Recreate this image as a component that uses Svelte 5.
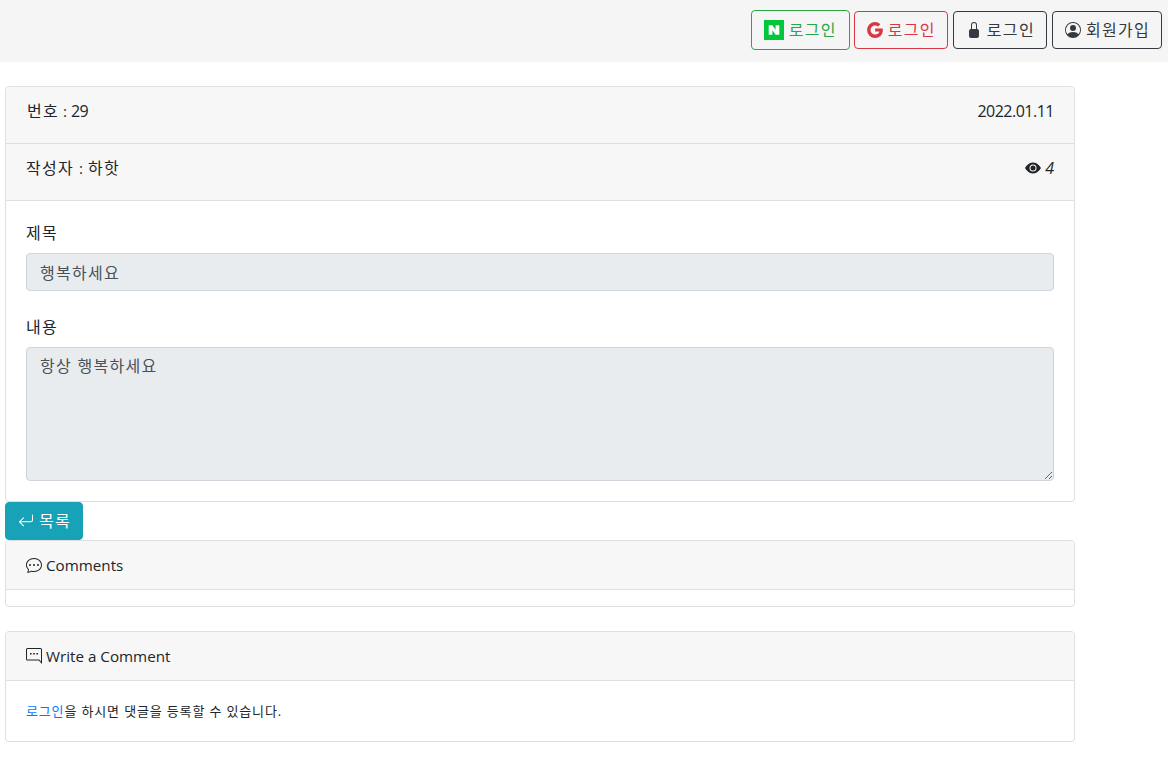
<script lang="ts">
	let title = '행복하세요';
	let content = '항상 행복하세요';
</script>

<header class="topbar">
	<button class="btn btn-naver">
		<svg class="naver" viewBox="0 0 20 20" aria-hidden="true">
			<rect width="20" height="20" fill="#00c73c" />
			<path d="M4.700 5.200h3.700l3.200 4.500V5.200h3.700v9.600h-3.700L8.400 10.300v4.500H4.700z" fill="#fff" />
		</svg>
		<span class="ko">로그인</span>
	</button>
	<button class="btn btn-google">
		<svg class="ico" viewBox="0 0 16 16" aria-hidden="true">
			<path fill="currentColor" d="M15.55 6.55H8.160v3.050h4.250c-.4 1.900-2 3-4.250 3A4.600 4.600 0 0 1 3.500 8a4.600 4.600 0 0 1 4.660-4.600c1.120 0 2.130.4 2.920 1.050l2.300-2.300A7.900 7.900 0 0 0 8.160 0 8 8 0 0 0 .1 8a8 8 0 0 0 8.060 8c4.030 0 7.700-2.930 7.700-8 0-.47-.12-.97-.31-1.450z" />
		</svg>
		<span class="ko">로그인</span>
	</button>
	<button class="btn btn-dark">
		<svg class="ico" viewBox="0 0 16 16" aria-hidden="true">
			<path fill="currentColor" d="M8 1a2 2 0 0 1 2 2v4H6V3a2 2 0 0 1 2-2zm3 6V3a3 3 0 0 0-6 0v4a2 2 0 0 0-2 2v5a2 2 0 0 0 2 2h6a2 2 0 0 0 2-2V9a2 2 0 0 0-2-2z" />
		</svg>
		<span class="ko">로그인</span>
	</button>
	<button class="btn btn-dark">
		<svg class="ico" viewBox="0 0 16 16" aria-hidden="true">
			<path fill="currentColor" d="M11 6a3 3 0 1 1-6 0 3 3 0 0 1 6 0z" />
			<path fill="currentColor" fill-rule="evenodd" d="M0 8a8 8 0 1 1 16 0A8 8 0 0 1 0 8zm8-7a7 7 0 0 0-5.470 11.370C3.240 11.230 4.800 10 8 10s4.760 1.230 5.470 2.370A7 7 0 0 0 8 1z" />
		</svg>
		<span class="ko">회원가입</span>
	</button>
</header>

<main class="page">
	<section class="card">
		<div class="card-header row-between">
			<span class="no"><span class="ko">번호</span> : <span class="num">29</span></span>
			<span class="num">2022.01.11</span>
		</div>
		<div class="card-header row-between">
			<span class="writer"><span class="ko">작성자</span> : <span class="ko">하핫</span></span>
			<span class="views">
				<svg class="eye" viewBox="0 0 16 16" aria-hidden="true">
					<path fill="currentColor" d="M10.500 8a2.500 2.500 0 1 1-5 0 2.500 2.500 0 0 1 5 0z" />
					<path fill="currentColor" d="M0 8s3-5.500 8-5.500S16 8 16 8s-3 5.500-8 5.500S0 8 0 8zm8 3.500a3.500 3.500 0 1 0 0-7 3.500 3.500 0 0 0 0 7z" />
				</svg>
				<em>4</em>
			</span>
		</div>
		<div class="card-body">
			<div class="form-group">
				<label class="ko" for="title">제목</label>
				<input id="title" class="form-control ko" value={title} readonly />
			</div>
			<div class="form-group last">
				<label class="ko" for="content">내용</label>
				<textarea id="content" class="form-control ko" readonly>{content}</textarea>
			</div>
		</div>
	</section>

	<button class="btn btn-info">
		<svg class="ico" viewBox="0 0 16 16" aria-hidden="true">
			<path fill="currentColor" fill-rule="evenodd" d="M14.500 1.500a.5.5 0 0 1 .5.5v4.800a2.500 2.500 0 0 1-2.500 2.500H2.707l3.147 3.146a.5.5 0 0 1-.708.708l-4-4a.5.5 0 0 1 0-.708l4-4a.5.5 0 1 1 .708.708L2.707 8.300H12.500A1.500 1.500 0 0 0 14 6.800V2a.5.5 0 0 1 .5-.5z" />
		</svg>
		<span class="ko">목록</span>
	</button>

	<section class="card">
		<div class="card-header small-head">
			<svg class="head-ico" viewBox="0 0 16 16" aria-hidden="true">
				<path fill="currentColor" d="M2.678 11.894a1 1 0 0 1 .287.801 10.970 10.970 0 0 1-.398 2c1.395-.323 2.247-.697 2.634-.893a1 1 0 0 1 .71-.074A8.060 8.060 0 0 0 8 14c3.996 0 7-2.807 7-6 0-3.192-3.004-6-7-6S1 4.808 1 8c0 1.468.617 2.830 1.678 3.894zm-.493 3.905a21.682 21.682 0 0 1-.713.129c-.2.032-.352-.176-.273-.362a9.680 9.680 0 0 0 .244-.637l.003-.01c.248-.72.45-1.548.524-2.319C.743 11.370 0 9.760 0 8c0-3.866 3.582-7 8-7s8 3.134 8 7-3.582 7-8 7a9.060 9.060 0 0 1-2.347-.306c-.52.263-1.639.742-3.468 1.105z" />
				<path fill="currentColor" d="M5 8a1 1 0 1 1-2 0 1 1 0 0 1 2 0zm4 0a1 1 0 1 1-2 0 1 1 0 0 1 2 0zm3 1a1 1 0 1 0 0-2 1 1 0 0 0 0 2z" />
			</svg>
			Comments
		</div>
		<div class="empty-body"></div>
	</section>

	<section class="card write">
		<div class="card-header small-head">
			<svg class="head-ico" viewBox="0 0 16 16" aria-hidden="true">
				<path fill="currentColor" fill-rule="evenodd" d="M1.500 0h13A1.500 1.500 0 0 1 16 1.500V16l-3.300-3.500H1.500A1.500 1.500 0 0 1 0 11V1.500A1.500 1.500 0 0 1 1.500 0zm0 1a.5.5 0 0 0-.5.5V11a.5.5 0 0 0 .5.5h11.600l1.900 2V1.500a.5.5 0 0 0-.5-.5z" />
				<path fill="currentColor" d="M4 5h1.600v1.600H4zm3.200 0h1.600v1.600H7.200zm3.200 0H12v1.600h-1.600z" />
			</svg>
			Write a Comment
		</div>
		<div class="card-body login-note">
			<a href="#login">로그인</a>을 하시면 댓글을 등록할 수 있습니다.
		</div>
	</section>
</main>

<style>
	:global(body) {
		background: #fff;
		color: #212529;
		font-family: 'Open Sans', 'Noto Sans CJK KR', sans-serif;
		font-size: 15.2px;
		line-height: 24px;
	}

	.ko {
		font-size: 16px;
		letter-spacing: 1.3px;
	}

	.num {
		font-size: 16px;
		letter-spacing: -0.5px;
	}

	.topbar {
		display: flex;
		justify-content: flex-end;
		align-items: center;
		gap: 5px;
		height: 62px;
		padding: 0 6px 2px 0;
		box-sizing: border-box;
		background: #f5f5f5;
	}

	.btn {
		display: inline-flex;
		align-items: center;
		gap: 5px;
		height: 38px;
		padding: 0 11px 0 12px;
		box-sizing: border-box;
		background: transparent;
		border: 1px solid #343a40;
		border-radius: 4px;
		color: #343a40;
		font: inherit;
		white-space: nowrap;
	}

	.btn-naver {
		height: 40px;
		margin-right: -1px;
		padding-right: 12px;
		border-color: #28a745;
		color: #28a745;
	}

	.btn-google {
		border-color: #dc3545;
		color: #dc3545;
	}

	.btn-info {
		background: #17a2b8;
		border-color: #17a2b8;
		color: #fff;
		vertical-align: top;
	}

	.naver {
		width: 20px;
		height: 20px;
	}

	.ico {
		width: 16px;
		height: 16px;
	}

	.page {
		width: 1070px;
		margin: 24px 0 0 5px;
	}

	.card {
		background: #fff;
		border: 1px solid #dfdfdf;
		border-radius: 4px;
		overflow: hidden;
	}

	.card-header {
		box-sizing: border-box;
		padding: 12px 20px;
		background: #f7f7f7;
		border-bottom: 1px solid #dfdfdf;
	}

	.row-between {
		display: flex;
		justify-content: space-between;
		align-items: flex-start;
		height: 57px;
	}

	.no {
		padding-left: 1px;
	}

	.writer {
		word-spacing: 1px;
	}

	.views {
		display: inline-flex;
		align-items: center;
		gap: 4px;
		font-size: 16px;
	}

	.eye {
		width: 16px;
		height: 16px;
	}

	.card-body {
		padding: 20px;
	}

	.form-group {
		margin-bottom: 24px;
	}

	.form-group.last {
		margin-bottom: 0;
	}

	label {
		display: block;
		margin-bottom: 8px;
	}

	.form-control {
		display: block;
		width: 100%;
		box-sizing: border-box;
		padding: 6px 12px 6px 13px;
		background: #e9ecef;
		border: 1px solid #ced4da;
		border-radius: 4px;
		color: #495057;
		font-family: inherit;
		line-height: 24px;
		outline: none;
	}

	input.form-control {
		height: 38px;
	}

	textarea.form-control {
		height: 134px;
	}

	.small-head {
		display: flex;
		align-items: center;
		gap: 4px;
		height: 49px;
	}

	.head-ico {
		width: 16px;
		height: 16px;
	}

	.empty-body {
		height: 16px;
	}

	.write {
		margin-top: 24px;
	}

	.login-note {
		height: 60px;
		padding-top: 18px;
		box-sizing: border-box;
		font-size: 13px;
		letter-spacing: 0.85px;
	}

	.login-note a {
		color: #007bff;
		text-decoration: none;
	}
</style>
